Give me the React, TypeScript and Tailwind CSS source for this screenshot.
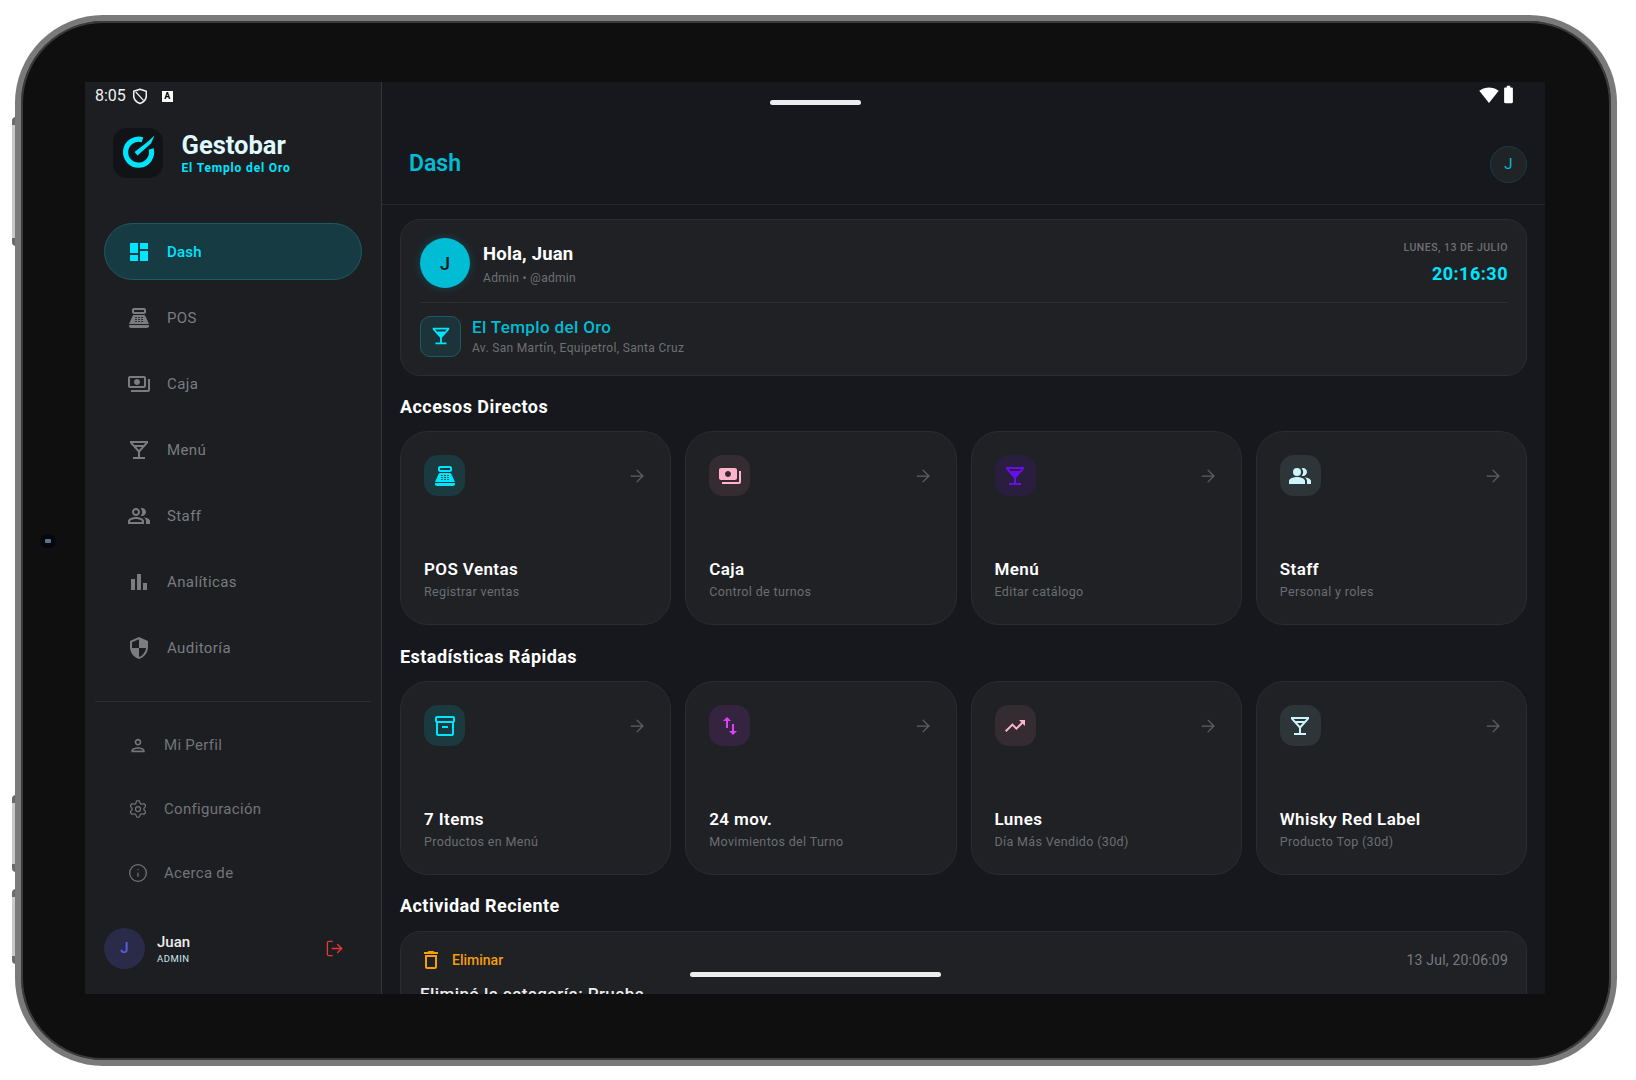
import React from "react";
import {
  MdDashboard, MdPointOfSale, MdOutlinePayments, MdPayments, MdOutlineLocalBar, MdLocalBar, MdOutlinePeopleAlt, MdPeopleAlt,
  MdBarChart, MdSecurity, MdOutlinePerson, MdSwapVert, MdTrendingUp, MdDeleteOutline, MdOutlineInventory2, MdBatteryFull, MdSignalWifi4Bar,
} from "react-icons/md";
import { Settings, Info, LogOut, ArrowRight } from "lucide-react";

const Logo = () => (
  <svg viewBox="0 0 50 50" className="w-[50px] h-[50px]" fill="none">
    <path d="M29.5 11.8 A13 13 0 1 0 38.2 21" stroke="#00e5ff" strokeWidth="5.2" strokeLinecap="butt" />
    <path d="M21.5 24 L35 13.5 L41.5 7.5 L38 15.5 L24.5 27.5 Z" fill="#00e5ff" />
  </svg>
);

const StatusShield = () => (
  <svg viewBox="2 1 20 23" className="w-[14px] h-[17px] ml-[7px]" fill="none" stroke="#f1f1f1" strokeWidth="2.2">
    <path d="M12 2 L21 5 V11.5 C21 16.5 17 20.5 12 22.5 C7 20.5 3 16.5 3 11.5 V5 Z" strokeLinejoin="round" />
    <path d="M6 6 L17 18" strokeWidth="1.8" />
  </svg>
);

type NavItem = { label: string; icon: React.ReactNode };
const nav: NavItem[] = [
  { label: "POS", icon: <MdPointOfSale size={24} /> },
  { label: "Caja", icon: <MdOutlinePayments size={24} /> },
  { label: "Menú", icon: <MdOutlineLocalBar size={24} /> },
  { label: "Staff", icon: <MdOutlinePeopleAlt size={24} /> },
  { label: "Analíticas", icon: <MdBarChart size={24} /> },
  { label: "Auditoría", icon: <MdSecurity size={24} /> },
];
const nav2: NavItem[] = [
  { label: "Mi Perfil", icon: <MdOutlinePerson size={21} /> },
  { label: "Configuración", icon: <Settings size={20} strokeWidth={1.5} /> },
  { label: "Acerca de", icon: <Info size={20} strokeWidth={1.5} /> },
];

type Card = { title: string; sub: string; bg: string; color: string; icon: React.ReactNode };
const shortcuts: Card[] = [
  { title: "POS Ventas", sub: "Registrar ventas", bg: "bg-[#1b3a3f]", color: "text-[#00e5ff]", icon: <MdPointOfSale size={24} /> },
  { title: "Caja", sub: "Control de turnos", bg: "bg-[#352c31]", color: "text-[#ffb4cb]", icon: <MdPayments size={24} /> },
  { title: "Menú", sub: "Editar catálogo", bg: "bg-[#2a1e3f]", color: "text-[#6a0bf0]", icon: <MdLocalBar size={24} /> },
  { title: "Staff", sub: "Personal y roles", bg: "bg-[#2e3539]", color: "text-[#cdf3fb]", icon: <MdPeopleAlt size={24} /> },
];
const stats: Card[] = [
  { title: "7 Items", sub: "Productos en Menú", bg: "bg-[#1b3a3f]", color: "text-[#00e5ff]", icon: <MdOutlineInventory2 size={24} /> },
  { title: "24 mov.", sub: "Movimientos del Turno", bg: "bg-[#35243f]", color: "text-[#e040fb]", icon: <MdSwapVert size={24} /> },
  { title: "Lunes", sub: "Día Más Vendido (30d)", bg: "bg-[#352c31]", color: "text-[#ffb4cb]", icon: <MdTrendingUp size={24} /> },
  { title: "Whisky Red Label", sub: "Producto Top (30d)", bg: "bg-[#2e3539]", color: "text-[#cdf3fb]", icon: <MdOutlineLocalBar size={24} /> },
];

const Tile = ({ c }: { c: Card }) => (
  <div className="h-[194px] rounded-[28px] border border-[#2a2c31] bg-[#1f2125] pl-[23px] pr-[23px] pt-[23px] flex flex-col">
    <div className="flex items-center justify-between">
      <div className={`w-[41px] h-[41px] rounded-[14px] flex items-center justify-center ${c.bg} ${c.color}`}>{c.icon}</div>
      <ArrowRight size={20} strokeWidth={1.5} className="text-[#5f6165]" />
    </div>
    <div className="mt-[61px] text-[17px] leading-[24px] font-semibold tracking-[0.4px] text-white">{c.title}</div>
    <div className="mt-[2px] text-[12.5px] leading-[18px] tracking-[0.35px] text-[#6b6e72]">{c.sub}</div>
  </div>
);

const SectionTitle = ({ children, className }: { children: React.ReactNode; className: string }) => (
  <h2 className={`text-[18px] leading-[24px] font-bold tracking-[0.45px] text-white ${className}`}>{children}</h2>
);

export default function App() {
  return (
    <div className="relative w-[1636px] h-[1080px] bg-white overflow-hidden pt-[15px] pl-[15px] font-['Roboto',sans-serif]">
      <div className="absolute left-[12px] top-[117px] w-[4px] h-[129px] rounded-l-sm bg-[#c9c9c9] border-y-[8px] border-[#6b6b6b]" />
      <div className="absolute left-[12px] top-[795px] w-[4px] h-[77px] rounded-l-sm bg-[#c9c9c9] border-y-[8px] border-[#6b6b6b]" />
      <div className="absolute left-[12px] top-[889px] w-[4px] h-[75px] rounded-l-sm bg-[#c9c9c9] border-y-[8px] border-[#6b6b6b]" />

      <div className="relative w-[1602px] h-[1051px] rounded-[88px] border-[6px] border-[#7a7a7a] bg-[#0f0f0f] shadow-[inset_0_0_0_2px_#3a3a3a] pt-[61px] pl-[64px]">
        <div className="absolute left-[19px] top-[513px] w-[16px] h-[14px] rounded-full bg-[#05070c] flex items-center justify-center">
          <div className="w-[6px] h-[4px] rounded-[1px] bg-[#5d7389]" />
        </div>

        <div className="relative w-[1460px] h-[912px] overflow-hidden flex bg-[#16181d]">
          {/* status bar */}
          <div className="absolute left-[10px] top-[4px] flex items-center text-[#f1f1f1] text-[16px] leading-[20px]">
            <span>8:05</span>
            <StatusShield />
            <span className="ml-[15px] w-[11px] h-[11px] bg-white text-black text-[9px] leading-[11px] font-bold text-center">A</span>
          </div>
          <div className="absolute left-[685px] top-[18px] w-[91px] h-[5px] rounded-full bg-[#ededed]" />
          <div className="absolute left-[1394px] top-[2px] flex items-center text-white">
            <MdSignalWifi4Bar size={20} />
            <MdBatteryFull size={21} className="-ml-[1px]" />
          </div>
          <div className="absolute left-[605px] top-[890px] w-[251px] h-[5px] rounded-full bg-[#ededed] z-10" />

          {/* sidebar */}
          <aside className="w-[297px] shrink-0 h-full bg-[#1c1e22] border-r border-[#33353a] flex flex-col">
            <div className="flex items-center pl-[28px] pt-[46px]">
              <div className="w-[50px] h-[50px] rounded-[14px] bg-[#121316]"><Logo /></div>
              <div className="ml-[18.5px] pt-[1px]">
                <div className="text-[25.5px] leading-[28px] font-bold text-[#dff9fd]">Gestobar</div>
                <div className="mt-[1px] text-[12px] leading-[16px] font-bold tracking-[0.85px] text-[#00e5ff]">El Templo del Oro</div>
              </div>
            </div>
            <nav className="mt-[45px] px-[19px] flex flex-col gap-[9px]">
              <div className="h-[57px] rounded-full bg-[#173b42] border border-[#1d5a63] flex items-center pl-[22px] text-[#00e5ff]">
                <MdDashboard size={24} />
                <span className="ml-[16px] pt-[2px] text-[15px] font-medium tracking-[0.2px]">Dash</span>
              </div>
              {nav.map((n) => (
                <div key={n.label} className="h-[57px] flex items-center pl-[23px] text-[#7a7c80]">
                  {n.icon}
                  <span className="ml-[16px] pt-[2px] text-[15px] tracking-[0.4px]">{n.label}</span>
                </div>
              ))}
            </nav>
            <div className="mt-[25px] mx-[10px] h-px bg-[#2c2e33]" />
            <div className="mt-[11px] px-[18px] flex flex-col">
              {nav2.map((n) => (
                <div key={n.label} className="h-[64px] flex items-center text-[#727478]">
                  <div className="w-[20px] ml-[25px] flex justify-center">{n.icon}</div>
                  <span className="ml-[16px] text-[15px] tracking-[0.3px]">{n.label}</span>
                </div>
              ))}
            </div>
            <div className="mt-[23px] pl-[19px] flex items-center">
              <div className="w-[41px] h-[41px] rounded-full bg-[#292b48] flex items-center justify-center text-[#5a5fe0] text-[15px] font-medium">J</div>
              <div className="ml-[12px] w-[168px]">
                <div className="text-[15px] leading-[18px] font-medium text-[#eeeeee]">Juan</div>
                <div className="mt-[2px] text-[9.5px] leading-[12px] tracking-[0.5px] text-[#c8e8ec]">ADMIN</div>
              </div>
              <LogOut size={19} strokeWidth={1.7} className="text-[#e53935]" />
            </div>
          </aside>

          {/* main */}
          <main className="flex-1 min-w-0 h-full flex flex-col">
            <header className="h-[123px] shrink-0 border-b border-[#26282d] flex items-center justify-between pt-[42px] pl-[27px] pr-[18px]">
              <h1 className="text-[23px] leading-[28px] font-semibold text-[#00bcd4]">Dash</h1>
              <div className="w-[37px] h-[37px] rounded-full bg-[#212427] border border-[#163f46] flex items-center justify-center text-[#00bcd4] text-[15px]">J</div>
            </header>
            <div className="pt-[14px] pl-[18px] pr-[18px]">
              <section className="h-[157px] rounded-[20px] border border-[#2a2c31] bg-[#1f2125] pl-[19px] pr-[18px] pt-[18px]">
                <div className="h-[65px] border-b border-[#2c2e33] flex items-start justify-between">
                  <div className="flex items-center">
                    <div className="w-[50px] h-[50px] rounded-full bg-[#00bcd4] shadow-[0_0_10px_rgba(0,188,212,0.25)] flex items-center justify-center text-[#14161a] text-[18px] font-medium">J</div>
                    <div className="ml-[13px] pt-[2px]">
                      <div className="text-[18.5px] leading-[24px] font-bold tracking-[0.2px] text-white">Hola, Juan</div>
                      <div className="mt-[3px] text-[12px] leading-[18px] tracking-[0.3px] text-[#6e7074]">Admin • @admin</div>
                    </div>
                  </div>
                  <div className="text-right">
                    <div className="mt-[3px] text-[10.5px] leading-[14px] font-medium tracking-[0.5px] text-[#6e7074]">LUNES, 13 DE JULIO</div>
                    <div className="mt-[8px] text-[18px] leading-[22px] font-bold tracking-[0.5px] text-[#00e5ff]">20:16:30</div>
                  </div>
                </div>
                <div className="mt-[12px] flex items-center">
                  <div className="w-[41px] h-[41px] rounded-[10px] bg-[#1c3439] border border-[#1d5a63] flex items-center justify-center text-[#00e5ff]">
                    <MdLocalBar size={22} />
                  </div>
                  <div className="ml-[11px] pt-[1px]">
                    <div className="text-[17px] leading-[22px] font-medium tracking-[0.35px] text-[#00bcd4]">El Templo del Oro</div>
                    <div className="mt-[1px] text-[12px] leading-[18px] tracking-[0.33px] text-[#6e7074]">Av. San Martín, Equipetrol, Santa Cruz</div>
                  </div>
                </div>
              </section>

              <SectionTitle className="mt-[19px]">Accesos Directos</SectionTitle>
              <div className="mt-[12px] grid grid-cols-4 gap-[14px]">
                {shortcuts.map((c) => <Tile key={c.title} c={c} />)}
              </div>

              <SectionTitle className="mt-[20px]">Estadísticas Rápidas</SectionTitle>
              <div className="mt-[12px] grid grid-cols-4 gap-[14px]">
                {stats.map((c) => <Tile key={c.title} c={c} />)}
              </div>

              <SectionTitle className="mt-[19px]">Actividad Reciente</SectionTitle>
              <section className="mt-[13px] h-[120px] rounded-[20px] border border-[#2a2c31] bg-[#1f2125] pl-[19px] pr-[18px] pt-[16px]">
                <div className="flex items-center justify-between">
                  <div className="flex items-center text-[#f59e0b]">
                    <MdDeleteOutline size={24} className="-ml-[1px]" />
                    <span className="ml-[9px] text-[14px] font-medium">Eliminar</span>
                  </div>
                  <span className="text-[14px] tracking-[0.2px] text-[#77797d]">13 Jul, 20:06:09</span>
                </div>
                <div className="mt-[10px] text-[17px] leading-[24px] font-medium tracking-[0.4px] text-[#eeeeee]">Eliminó la categoría: Prueba</div>
              </section>
            </div>
          </main>
        </div>
      </div>
    </div>
  );
}
